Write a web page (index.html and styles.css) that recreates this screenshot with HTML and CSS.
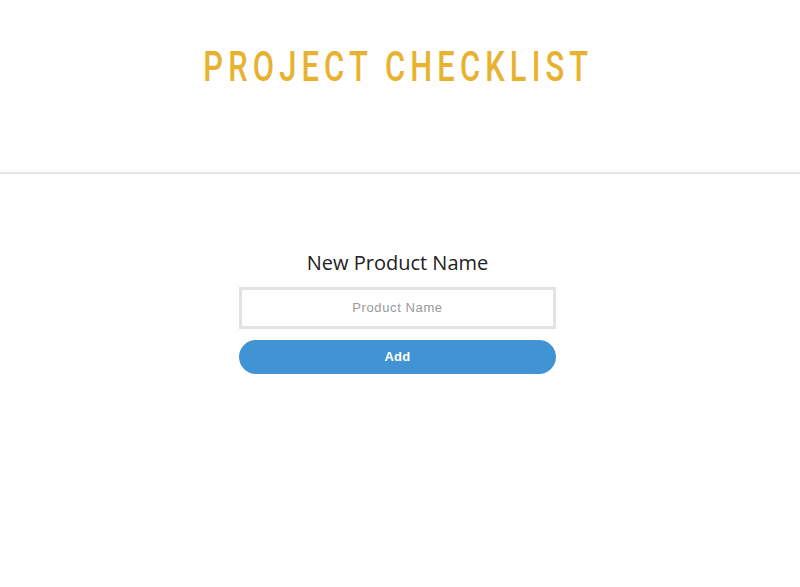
FILE: index.html
```html
<!DOCTYPE html>
<html>
<head>
<meta charset="utf-8">
<link rel="stylesheet" href="styles.css">
</head>
<body>
<header class="header">
  <h1 class="title">PROJECT CHECKLIST</h1>
</header>
<main class="main">
  <form class="form">
    <h2 class="label">New Product Name</h2>
    <input class="input" type="text" placeholder="Product Name">
    <button class="btn" type="button">Add</button>
  </form>
</main>
</body>
</html>
```
FILE: styles.css
```css
html, body {
  margin: 0;
  padding: 0;
  background: #ffffff;
}
.header {
  height: 174px;
  border-bottom: 2px solid #e6e6e6;
  box-sizing: border-box;
  display: flex;
  justify-content: center;
  padding-right: 4px;
}
.title {
  margin: 43px 0 0 0;
  font-family: Roboto, "DejaVu Sans", sans-serif;
  font-weight: 500;
  font-size: 42px;
  line-height: 48px;
  letter-spacing: 7px;
  color: #e8b230;
  transform: scaleX(0.735);
  white-space: nowrap;
}
.main {
  display: flex;
  justify-content: center;
  padding-top: 76px;
  padding-right: 5px;
}
.form {
  width: 317px;
  display: flex;
  flex-direction: column;
  align-items: center;
}
.label {
  margin: 0 0 11px 0;
  font-family: "Open Sans", "Noto Sans", sans-serif;
  font-weight: 400;
  font-size: 20px;
  line-height: 26px;
  color: #222222;
}
.input {
  width: 100%;
  height: 42px;
  box-sizing: border-box;
  border: 3px solid #e3e3e3;
  text-align: center;
  font-family: "Liberation Sans", Arial, sans-serif;
  font-size: 13px;
  letter-spacing: 0.6px;
  color: #333;
  outline: none;
  padding-bottom: 3px;
}
.input::placeholder {
  color: #9a9a9a;
}
.btn {
  margin-top: 11px;
  width: 100%;
  height: 34px;
  border: none;
  border-radius: 17px;
  background: #4194d4;
  color: #ffffff;
  font-family: "Liberation Sans", Arial, sans-serif;
  font-weight: 700;
  font-size: 13px;
  letter-spacing: 0.3px;
  padding-bottom: 3px;
}
```
